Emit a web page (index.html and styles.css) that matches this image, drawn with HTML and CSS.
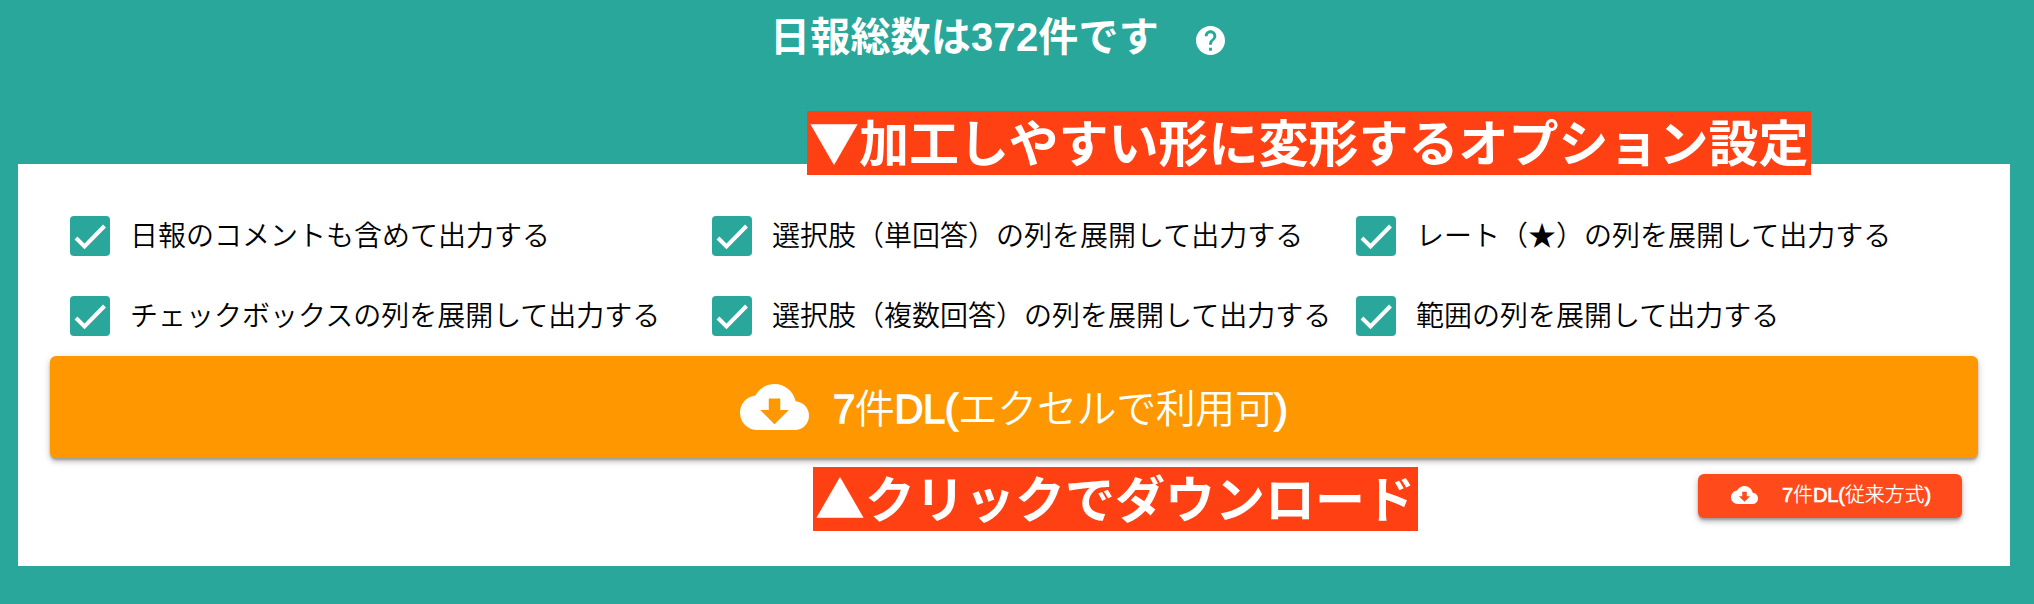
FILE: index.html
```html
<!DOCTYPE html>
<html lang="ja">
<head>
<meta charset="utf-8">
<title>日報ダウンロード</title>
<link rel="stylesheet" href="styles.css">
</head>
<body>
<header class="header">
  <h1 class="title">日報総数は372件です</h1>
  <svg class="help" viewBox="2 2 20 20"><path fill="#fff" d="M12 2C6.48 2 2 6.48 2 12s4.48 10 10 10 10-4.480 10-10S17.520 2 12 2zm1 17h-2v-2h2v2zm2.070-7.750l-.9.920C13.450 12.900 13 13.500 13 15h-2v-.5c0-1.100.45-2.100 1.170-2.830l1.240-1.260c.37-.36.59-.86.59-1.410 0-1.100-.9-2-2-2s-2 .9-2 2H8c0-2.210 1.790-4 4-4s4 1.790 4 4c0 .88-.36 1.680-.93 2.250z"/></svg>
</header>
<main class="panel">
  <div class="options">
    <label class="option"><span class="box"><svg viewBox="0 0 40 40"><path d="M6 22 L14.500 30.500 L34.500 10"/></svg></span><span class="label">日報のコメントも含めて出力する</span></label>
    <label class="option"><span class="box"><svg viewBox="0 0 40 40"><path d="M6 22 L14.500 30.500 L34.500 10"/></svg></span><span class="label">選択肢（単回答）の列を展開して出力する</span></label>
    <label class="option"><span class="box"><svg viewBox="0 0 40 40"><path d="M6 22 L14.500 30.500 L34.500 10"/></svg></span><span class="label">レート（★）の列を展開して出力する</span></label>
    <label class="option"><span class="box"><svg viewBox="0 0 40 40"><path d="M6 22 L14.500 30.500 L34.500 10"/></svg></span><span class="label">チェックボックスの列を展開して出力する</span></label>
    <label class="option"><span class="box"><svg viewBox="0 0 40 40"><path d="M6 22 L14.500 30.500 L34.500 10"/></svg></span><span class="label">選択肢（複数回答）の列を展開して出力する</span></label>
    <label class="option"><span class="box"><svg viewBox="0 0 40 40"><path d="M6 22 L14.500 30.500 L34.500 10"/></svg></span><span class="label">範囲の列を展開して出力する</span></label>
  </div>
  <div class="download">
    <svg class="cloud" viewBox="0 4 24 16" preserveAspectRatio="none"><path fill="#fff" d="M19.350 10.040C18.670 6.590 15.640 4 12 4 9.110 4 6.600 5.640 5.350 8.040 2.340 8.360 0 10.910 0 14c0 3.310 2.690 6 6 6h13c2.760 0 5-2.240 5-5 0-2.640-2.050-4.780-4.650-4.960zM17 13l-5 5-5-5h3V9h4v4h3z"/></svg>
    <span class="caption"><b>7</b>件<b>DL(</b>エクセルで利用可<b>)</b></span>
  </div>
  <div class="download download-small">
    <svg class="cloud" viewBox="0 4 24 16"><path fill="#fff" d="M19.350 10.040C18.670 6.590 15.640 4 12 4 9.110 4 6.600 5.640 5.350 8.040 2.340 8.360 0 10.910 0 14c0 3.310 2.690 6 6 6h13c2.760 0 5-2.240 5-5 0-2.640-2.050-4.780-4.650-4.960zM17 13l-5 5-5-5h3V9h4v4h3z"/></svg>
    <span class="caption"><b>7</b>件<b>DL(</b>従来方式<b>)</b></span>
  </div>
</main>
<div class="note note-top">▼加工しやすい形に変形するオプション設定</div>
<div class="note note-bottom">▲クリックでダウンロード</div>
</body>
</html>
```
FILE: styles.css
```css
* { box-sizing: border-box; }
body {
  margin: 0;
  height: 604px;
  overflow: hidden;
  position: relative;
  background: #28a79a;
  font-family: "Liberation Sans", "Noto Sans CJK JP", sans-serif;
}
.header {
  height: 164px;
  padding: 7px 0 0 770px;
  display: flex;
  align-items: flex-start;
  color: #fff;
}
.title {
  margin: 0;
  width: 387px;
  font-size: 40px;
  line-height: 60px;
  font-weight: 700;
  letter-spacing: .2px;
  white-space: nowrap;
}
.help { width: 29px; height: 29px; margin: 19px 0 0 39px; }
.panel {
  width: 1992px;
  height: 402px;
  margin-left: 18px;
  padding: 52px 32px 0;
  background: #fff;
  display: flex;
  flex-direction: column;
}
.options {
  display: grid;
  grid-template-columns: 642px 644px 1fr;
  row-gap: 40px;
  margin-bottom: 20px;
}
.option {
  display: flex;
  height: 40px;
  padding-left: 20px;
  gap: 20px;
  align-items: flex-start;
}
.box {
  flex: none;
  width: 40px;
  height: 40px;
  border-radius: 4px;
  background: #28a79a;
}
.box svg { display: block; fill: none; stroke: #fff; stroke-width: 4; }
.label {
  font-family: "Noto Sans CJK JP", sans-serif;
  font-size: 28px;
  font-weight: 350;
  line-height: 37px;
  white-space: nowrap;
  color: #000;
}
.download {
  flex: none;
  height: 102px;
  padding-left: 690px;
  display: flex;
  align-items: center;
  gap: 24px;
  border-radius: 6px;
  background: #ff9700;
  color: #fff;
  box-shadow: 0 4px 4px rgba(0, 0, 0, .16), 0 2px 10px rgba(0, 0, 0, .14), 0 2px 2px rgba(0, 0, 0, .2);
}
.cloud { width: 69px; height: 46px; flex: none; }
.caption {
  padding-top: 4px;
  font-size: 40px;
  font-weight: 350;
  line-height: 60px;
  letter-spacing: -.4px;
  white-space: nowrap;
}
.caption b { font-weight: 400; -webkit-text-stroke: 1.4px #fff; }
.download-small {
  width: 264px;
  height: 44px;
  margin: 16px 16px 0 auto;
  padding-left: 33px;
  background: #ff4a1c;
}
.download-small .caption { padding: 0 0 2px; font-size: 20px; line-height: 28px; letter-spacing: -.1px; }
.download-small .cloud { width: 27px; height: 18px; margin-top: -2px; }
.download-small .caption b { -webkit-text-stroke-width: .7px; }
.note {
  position: absolute;
  height: 64px;
  padding-left: 2px;
  background: #ff4013;
  color: #fff;
  font-family: "Noto Sans CJK JP", sans-serif;
  font-size: 50px;
  font-weight: 700;
  line-height: 58px;
  white-space: nowrap;
}
.note-top { left: 807px; top: 111px; width: 1004px; }
.note-bottom { left: 813px; top: 467px; width: 605px; }
```
